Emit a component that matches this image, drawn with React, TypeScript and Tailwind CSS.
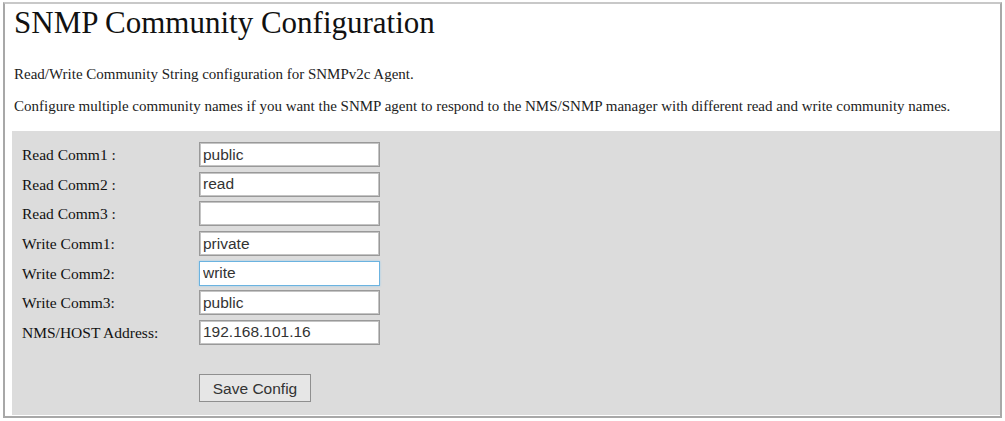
import React from "react";

const rows: { label: string; value: string; focused?: boolean }[] = [
  { label: "Read Comm1 :", value: "public" },
  { label: "Read Comm2 :", value: "read" },
  { label: "Read Comm3 :", value: "" },
  { label: "Write Comm1:", value: "private" },
  { label: "Write Comm2:", value: "write", focused: true },
  { label: "Write Comm3:", value: "public" },
  { label: "NMS/HOST Address:", value: "192.168.101.16" },
];

export default function App() {
  return (
    <div className="w-[1005px] h-[421px] bg-white pt-[2px] pl-[3px] pr-[3px]">
      <div
        className="border-2 border-[#a8a8a8] border-t-[#c8c8c8] h-[416px] pl-[7px] pt-[0px] text-black"
        style={{ fontFamily: '"Liberation Serif", "Times New Roman", serif' }}
      >
        <h1 className="text-[31px] leading-[36px] pl-[2px] pt-[1px] text-[#111]">
          SNMP Community Configuration
        </h1>
        <p className="text-[15px] leading-[18px] mt-[24px] pl-[2px] text-[#222]">
          Read/Write Community String configuration for SNMPv2c Agent.
        </p>
        <p className="text-[15px] leading-[18px] mt-[14px] pl-[2px] text-[#222]">
          Configure multiple community names if you want the SNMP agent to respond to the NMS/SNMP manager with different read and write community names.
        </p>
        <div className="mt-[16px] bg-[#dcdcdc] h-[284px] pl-[10px] pt-[9px]">
          <div className="flex flex-col">
            {rows.map((r) => (
              <div key={r.label} className="flex items-center h-[29.6px]">
                <div className="w-[177px] text-[15.5px] text-[#111]">{r.label}</div>
                <input
                  readOnly
                  value={r.value}
                  className={
                    "w-[181px] h-[25px] bg-white px-[3px] text-[15.5px] text-[#333] outline-none " +
                    (r.focused
                      ? "border border-[#6bb3e0] shadow-[0_0_2px_#9fd0ef]"
                      : "border border-[#999] shadow-[inset_0_0_0_1px_#c4c4c4]")
                  }
                  style={{ fontFamily: '"Liberation Sans", Arial, sans-serif' }}
                />
              </div>
            ))}
          </div>
          <div className="pl-[177px] mt-[27px]">
            <button
              className="w-[112px] h-[28px] bg-[#e6e6e6] border border-[#8f8f8f] text-[15.5px] text-[#333]"
              style={{ fontFamily: '"Liberation Sans", Arial, sans-serif' }}
            >
              Save Config
            </button>
          </div>
        </div>
      </div>
    </div>
  );
}
